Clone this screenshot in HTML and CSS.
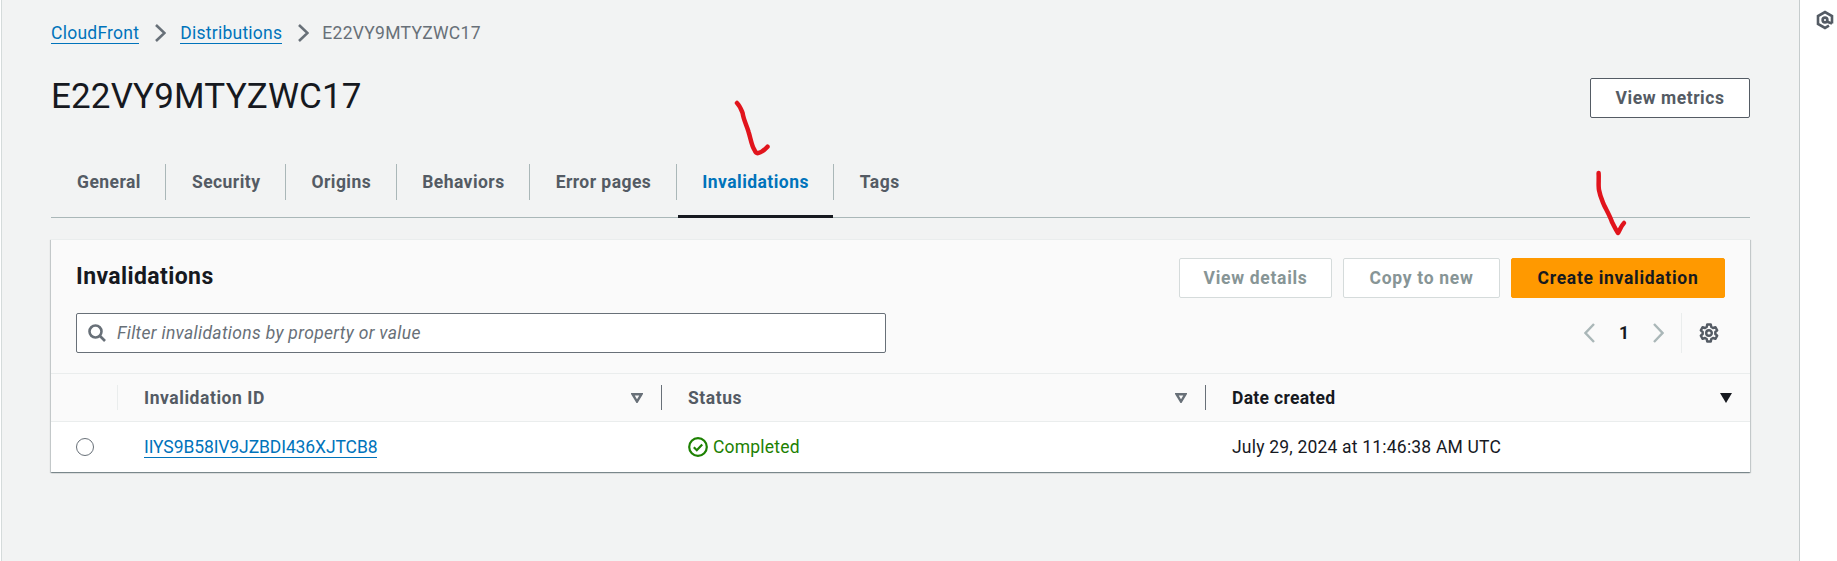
FILE: index.html
```html
<!DOCTYPE html>
<html lang="en">
<head>
    <meta charset="UTF-8">
    <title>E22VY9MTYZWC17 | CloudFront</title>
    <link rel="stylesheet" href="styles.css">
</head>
<body>
    <main class="main">
        <nav class="crumbs">
            <a class="link" href="#">CloudFront</a>
            <svg class="crumb-sep" viewBox="0 0 12 20"><path d="M2 2l8.500 8-8.500 8"/></svg>
            <a class="link" href="#">Distributions</a>
            <svg class="crumb-sep crumb-sep-last" viewBox="0 0 12 20"><path d="M2 2l8.500 8-8.500 8"/></svg>
            <span class="crumb-current">E22VY9MTYZWC17</span>
        </nav>

        <header class="page-head">
            <h1 class="page-title">E22VY9MTYZWC17</h1>
            <button class="btn btn-normal">View metrics</button>
        </header>

        <div class="tabs">
            <a class="tab" href="#">General</a>
            <a class="tab" href="#">Security</a>
            <a class="tab" href="#">Origins</a>
            <a class="tab" href="#">Behaviors</a>
            <a class="tab" href="#">Error pages</a>
            <a class="tab tab-active" href="#">Invalidations</a>
            <a class="tab tab-last" href="#">Tags</a>
        </div>

        <section class="card">
            <div class="card-head">
                <div class="card-row">
                    <h2 class="card-title">Invalidations</h2>
                    <div class="actions">
                        <button class="btn btn-disabled btn-details">View details</button>
                        <button class="btn btn-disabled">Copy to new</button>
                        <button class="btn btn-primary">Create invalidation</button>
                    </div>
                </div>
                <div class="card-row card-row-tools">
                    <div class="filter">
                        <svg class="filter-icon" viewBox="0 0 18 18"><circle cx="7.500" cy="7.500" r="6"/><path d="M12 12l5 5"/></svg>
                        <span class="filter-text">Filter invalidations by property or value</span>
                    </div>
                    <div class="pager">
                        <svg class="pager-arrow" viewBox="0 0 11 20"><path d="M10 1L1.500 10l8.500 9"/></svg>
                        <span class="pager-num">1</span>
                        <svg class="pager-arrow" viewBox="0 0 11 20"><path d="M1 1l8.500 9L1 19"/></svg>
                        <span class="pager-div"></span>
                        <svg class="gear" viewBox="0 0 20 20">
                            <path d="M8.200 1.500h3.600l.5 2.500 1.700 1 2.400-.8 1.800 3.100-1.900 1.700v2l1.900 1.700-1.800 3.100-2.400-.8-1.700 1-.5 2.500H8.200l-.5-2.500-1.700-1-2.400.8-1.800-3.100 1.900-1.700v-2L1.800 7.300l1.800-3.100 2.400.8 1.700-1z"/>
                            <circle cx="10" cy="10" r="2.800"/>
                        </svg>
                    </div>
                </div>
            </div>

            <div class="grid grid-head">
                <div class="th th-blank"></div>
                <div class="th">
                    <span>Invalidation ID</span>
                    <svg class="sort" viewBox="0 0 12 10"><path d="M1.500 1.200h9L6 8.600z"/></svg>
                </div>
                <div class="th">
                    <span>Status</span>
                    <svg class="sort" viewBox="0 0 12 10"><path d="M1.500 1.200h9L6 8.600z"/></svg>
                </div>
                <div class="th th-sorted">
                    <span>Date created</span>
                    <svg class="sort" viewBox="0 0 12 10"><path d="M0 0h12L6 10z"/></svg>
                </div>
            </div>

            <div class="grid grid-row">
                <div class="td td-radio"><span class="radio"></span></div>
                <div class="td"><a class="link link-id" href="#">IIYS9B58IV9JZBDI436XJTCB8</a></div>
                <div class="td td-status">
                    <svg class="status-icon" viewBox="0 0 20 20"><circle cx="10" cy="10" r="8.800"/><path d="M5.800 10.200l3 3 5.400-5.800"/></svg>
                    <span>Completed</span>
                </div>
                <div class="td">July 29, 2024 at 11:46:38 AM UTC</div>
            </div>
        </section>

        <svg class="scribble scribble-tab" viewBox="0 0 40 60"><path d="M7 3c3 3 4 6 5.600 10 1 7 4 12 5.900 18.700 2 6 3 14 6 18.300 1 2.500 2.500 3.500 3.900 3 3.500-.5 6.500-3.500 9.100-6.300"/></svg>
        <svg class="scribble scribble-btn" viewBox="0 0 40 70"><path d="M6.600 3c.5 6-.5 12 .4 17 1 6 3 10 5 15 3 6 6 11 8 17 2 4 4 8 6 11 2-3 3-7 6-10"/></svg>
    </main>

    <aside class="side">
        <svg class="side-icon" viewBox="0 0 18 20"><path d="M16 13.500V6L9 2 2 6v8l7 4 4-2.300"/><circle cx="9" cy="10" r="2.400"/><path d="M10.500 11.500l5.500 2"/></svg>
    </aside>
</body>
</html>
```

FILE: styles.css
```css
* {
    box-sizing: border-box;
}
html, body {
    height: 100%;
}
body {
    margin: 0;
    padding-left: 1px;
    display: flex;
    overflow: hidden;
    background-color: #fff;
    color: #16191f;
    font-family: 'Roboto', 'Liberation Sans', sans-serif;
    font-size: 17.5px;
    letter-spacing: 0.2px;
}
a {
    text-decoration: none;
}

.main {
    position: relative;
    flex: 1;
    min-width: 0;
    padding: 0 49px;
    background-color: #f2f3f3;
    border-left: 1px solid #d5dbdb;
}
.side {
    width: 38px;
    padding: 10px 0 0 16px;
    border-left: 1px solid #c6cccd;
    background-color: #fff;
}
.side-icon {
    display: block;
    width: 18px;
    height: 20px;
    fill: none;
    stroke: #545b64;
    stroke-width: 2.6;
}

/* breadcrumbs */
.crumbs {
    display: flex;
    align-items: center;
    height: 24px;
    margin-top: 21px;
}
.link {
    color: #0073bb;
    border-bottom: 1px solid #0073bb;
    line-height: 20px;
    letter-spacing: 0.25px;
}
.link-id {
    letter-spacing: -0.1px;
}
.crumb-sep {
    width: 12px;
    height: 20px;
    margin: 0 14.5px;
    fill: none;
    stroke: #687078;
    stroke-width: 2.6;
}
.crumb-sep-last {
    margin-right: 13.5px;
}
.crumb-current {
    color: #687078;
    letter-spacing: 0.3px;
}

/* title row */
.page-head {
    display: flex;
    align-items: center;
    justify-content: space-between;
    margin-top: 33px;
}
.page-title {
    margin: 0;
    padding-bottom: 2px;
    font-size: 35px;
    font-weight: 400;
    line-height: 38px;
    letter-spacing: 0.15px;
}
.btn {
    height: 40px;
    padding: 0 25.5px;
    border-radius: 2px;
    font-family: inherit;
    font-size: 17.5px;
    font-weight: 700;
    letter-spacing: 0.7px;
    white-space: nowrap;
}
.btn-normal {
    padding: 0 24.5px;
    letter-spacing: 0.55px;
    background-color: #fff;
    border: 1px solid #545b64;
    color: #545b64;
}
.btn-disabled {
    background-color: #fff;
    border: 1px solid #d5dbdb;
    color: #879596;
}
.btn-details {
    padding: 0 23.5px;
}
.btn-primary {
    width: 214px;
    padding: 0;
    background-color: #ff9900;
    border: 1px solid #ff9900;
    color: #16191f;
}

/* tabs */
.tabs {
    display: flex;
    height: 54px;
    margin-top: 46px;
    border-bottom: 1px solid #aab7b8;
}
.tab {
    position: relative;
    display: flex;
    align-items: center;
    height: 36px;
    padding: 0 24.5px 0 25.5px;
    border-right: 1px solid #aab7b8;
    color: #545b64;
    font-weight: 700;
    letter-spacing: 0.45px;
}
.tab:first-child {
    padding-left: 26px;
}
.tab-last {
    border-right: none;
}
.tab-active {
    color: #0073bb;
}
.tab-active::after {
    content: "";
    position: absolute;
    left: 1px;
    right: 0;
    top: 51px;
    height: 3px;
    background-color: #16191f;
}

/* card */
.card {
    margin-top: 21px;
    background-color: #fff;
    box-shadow: 0 1px 1px 0 rgba(0, 28, 36, 0.3), 1px 1px 1px 0 rgba(0, 28, 36, 0.15), -1px 1px 1px 0 rgba(0, 28, 36, 0.15);
}
.card-head {
    padding: 18px 25px 20px;
    background-color: #fafafa;
    border-top: 1px solid #eaeded;
}
.card-row {
    display: flex;
    align-items: center;
    justify-content: space-between;
}
.card-row-tools {
    margin-top: 15px;
}
.card-title {
    margin: 0;
    padding-bottom: 4px;
    font-size: 23px;
    font-weight: 700;
    letter-spacing: 0.4px;
}
.actions {
    display: flex;
    gap: 11px;
}

.filter {
    display: flex;
    align-items: center;
    width: 810px;
    height: 40px;
    padding-left: 11px;
    background-color: #fff;
    border: 1px solid #687078;
    border-radius: 2px;
}
.filter-icon {
    width: 18px;
    height: 18px;
    fill: none;
    stroke: #687078;
    stroke-width: 2.6;
}
.filter-text {
    margin-left: 11px;
    color: #687078;
    font-style: italic;
    letter-spacing: 0.32px;
}

.pager {
    display: flex;
    align-items: center;
    height: 40px;
    margin-right: 6px;
}
.pager-arrow {
    width: 11px;
    height: 20px;
    fill: none;
    stroke: #aab7b8;
    stroke-width: 2.4;
}
.pager-num {
    width: 58px;
    text-align: center;
    font-weight: 700;
}
.pager-div {
    width: 1px;
    height: 40px;
    margin: 0 17px;
    background-color: #eaeded;
}
.gear {
    width: 20px;
    height: 20px;
    fill: none;
    stroke: #545b64;
    stroke-width: 2.4;
    stroke-linejoin: round;
}

/* table */
.grid {
    display: grid;
    grid-template-columns: 67px 544px 544px 1fr;
    border-top: 1px solid #eaeded;
}
.grid-head {
    align-items: center;
    height: 48px;
    background-color: #fafafa;
}
.grid-row {
    align-items: center;
    height: 51px;
    background-color: #fff;
}
.th {
    display: flex;
    align-items: center;
    justify-content: space-between;
    height: 25px;
    padding: 0 18px 0 26px;
    border-right: 1px solid #687078;
    color: #545b64;
    font-weight: 700;
    letter-spacing: 0.55px;
}
.th-blank {
    padding: 0;
    border-right-color: #eaeded;
}
.th-sorted {
    border-right: none;
    color: #16191f;
    letter-spacing: 0.3px;
}
.sort {
    width: 12px;
    height: 10px;
    fill: none;
    stroke: #687078;
    stroke-width: 2.4;
}
.th-sorted .sort {
    fill: #16191f;
    stroke: none;
}
.td {
    padding-left: 26px;
}
.td-radio {
    padding-left: 25px;
}
.radio {
    display: block;
    width: 18px;
    height: 18px;
    background-color: #fff;
    border: 1.5px solid #687078;
    border-radius: 50%;
}
.td-status {
    display: flex;
    align-items: center;
    gap: 5px;
    color: #1d8102;
}
.status-icon {
    width: 20px;
    height: 20px;
    fill: none;
    stroke: #1d8102;
    stroke-width: 2.2;
}

/* red marker strokes drawn over the page */
.scribble {
    position: absolute;
    fill: none;
    stroke: #e1141c;
    stroke-width: 4.5;
    stroke-linecap: round;
    stroke-linejoin: round;
}
.scribble-tab {
    left: 728px;
    top: 100px;
    width: 40px;
    height: 60px;
}
.scribble-btn {
    left: 1590px;
    top: 170px;
    width: 40px;
    height: 70px;
}
```
